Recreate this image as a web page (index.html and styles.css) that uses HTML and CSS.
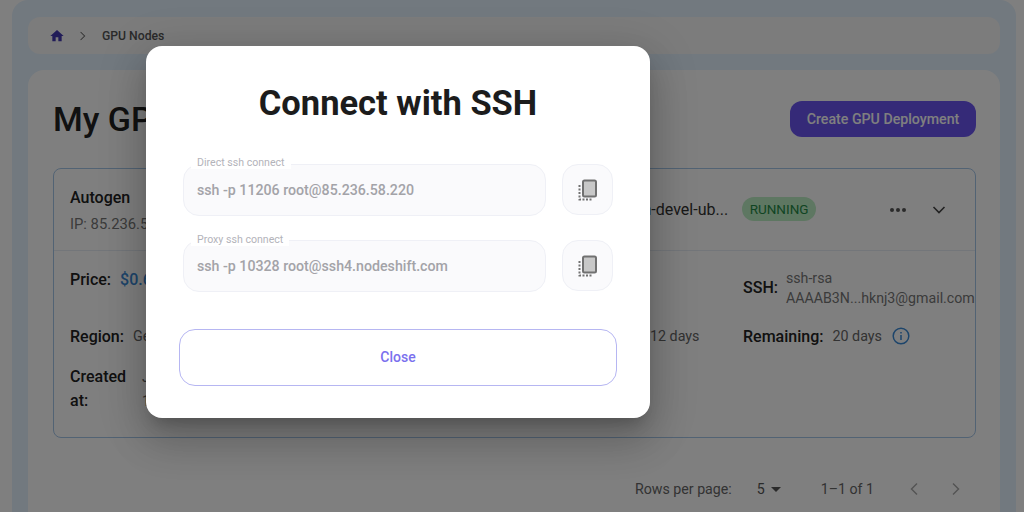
FILE: index.html
```html
<!DOCTYPE html>
<html lang="en">
<head>
<meta charset="utf-8">
<title>GPU Nodes</title>
<link rel="stylesheet" href="styles.css">
</head>
<body>
<div class="shell">
  <nav class="crumbs">
    <svg class="home" viewBox="0 0 24 24" width="16" height="16"><path d="M10 20v-6h4v6h5v-8h3L12 3 2 12h3v8z"/></svg>
    <svg class="sep" viewBox="0 0 10 12" width="8" height="10"><path d="M2 1l5 5-5 5"/></svg>
    <span class="crumb-text">GPU Nodes</span>
  </nav>
  <main class="panel">
    <header class="panel-head">
      <h1 class="page-title">My GPU Nodes</h1>
      <button class="create">Create GPU Deployment</button>
    </header>
    <section class="node">
      <div class="node-head">
        <div class="node-id">
          <div class="node-name">Autogen</div>
          <div class="node-ip">IP: 85.236.58.220</div>
        </div>
        <span class="node-image">pytorch-devel-ub...</span>
        <span class="status">RUNNING</span>
        <span class="dots"><i></i><i></i><i></i></span>
        <svg class="chev" viewBox="0 0 14 8" width="14" height="8"><path d="M1.500 1l5.500 5.500L12.500 1"/></svg>
      </div>
      <div class="node-body">
        <div class="row row-price">
          <div class="cell"><b class="key">Price:</b><span class="price">$0.60/hr</span></div>
          <div class="cell cell-ssh"><b class="key">SSH:</b><span class="ssh">ssh-rsa<br>AAAAB3N...hknj3@gmail.com</span></div>
        </div>
        <div class="row row-region">
          <div class="cell"><b class="key">Region:</b><span class="val">Germany</span></div>
          <div class="cell cell-used"><span class="val">12 days</span></div>
          <div class="cell cell-remain"><b class="key">Remaining:</b><span class="val">20 days</span>
            <svg class="info" viewBox="0 0 18 18" width="18" height="18"><circle cx="9" cy="9" r="7.800"/><path d="M9 8v5M9 5v1.600"/></svg>
          </div>
        </div>
        <div class="row-created">
          <b class="key created-key">Created at:</b><span class="val created-val">Jun 10, 2024<br>10:30</span>
        </div>
      </div>
    </section>
    <footer class="pager">
      <span>Rows per page:</span>
      <span class="per">5<svg viewBox="0 0 10 5" width="10" height="5"><path d="M0 0h10L5 5z"/></svg></span>
      <span class="range">1–1 of 1</span>
      <svg class="arrow off" viewBox="0 0 10 14" width="10" height="14"><path d="M8 1.500L2.500 7 8 12.500"/></svg>
      <svg class="arrow off" viewBox="0 0 10 14" width="10" height="14"><path d="M2 1.500L7.500 7 2 12.500"/></svg>
    </footer>
  </main>
</div>

<div class="backdrop">
  <div class="modal">
    <h2 class="modal-title">Connect with SSH</h2>
    <div class="field-row">
      <div class="field"><span class="legend">Direct ssh connect</span><span class="cmd">ssh -p 11206 root@85.236.58.220</span></div>
      <button class="copy" aria-label="Copy">
        <svg viewBox="0 0 20 22" width="20" height="22"><rect class="copy-back" x="5" y="1.500" width="13" height="16" rx="1.500"/><path class="copy-dots" d="M1.500 6v14.500H14"/></svg>
      </button>
    </div>
    <div class="field-row">
      <div class="field"><span class="legend legend-low">Proxy ssh connect</span><span class="cmd">ssh -p 10328 root@ssh4.nodeshift.com</span></div>
      <button class="copy" aria-label="Copy">
        <svg viewBox="0 0 20 22" width="20" height="22"><rect class="copy-back" x="5" y="1.500" width="13" height="16" rx="1.500"/><path class="copy-dots" d="M1.500 6v14.500H14"/></svg>
      </button>
    </div>
    <button class="close">Close</button>
  </div>
</div>
</body>
</html>
```

FILE: styles.css
```css
* { box-sizing: border-box; }
html, body { margin: 0; height: 100%; overflow: hidden; }
body { background: #fff; font-family: Roboto, "Liberation Sans", sans-serif; color: #222; width: 1024px; height: 512px; position: relative; }

.shell { margin: 0 8px 0 12px; height: 512px; padding: 17px 16px 0; background: #e4f2ff; border-radius: 16px 16px 0 0; display: flex; flex-direction: column; gap: 16px; overflow: hidden; }

.crumbs { height: 37px; flex: none; background: #f8f8f8; border-radius: 12px; display: flex; align-items: center; padding-left: 21px; }
.home { fill: #4338b0; }
.sep { fill: none; stroke: #666; stroke-width: 1.300; margin-left: 14px; }
.crumb-text { font-size: 12.200px; font-weight: 500; color: #555; margin-left: 15px; }

.panel { flex: 1; background: #fff; border-radius: 16px 16px 0 0; padding: 30px 24px 0 25px; }
.panel-head { display: flex; justify-content: space-between; align-items: center; height: 37px; }
.page-title { margin: 0; font-size: 34px; font-weight: 500; color: #222; white-space: nowrap; }
.create { width: 186px; height: 36px; border: 0; border-radius: 12px; background: #6a54f0; color: #fff; font: 500 14.200px Roboto, sans-serif; }

.node { margin-top: 31px; height: 270px; border: 1px solid #a5c6e8; border-radius: 8px; }
.node-head { height: 82px; border-bottom: 1px solid #e6edf5; display: flex; align-items: center; padding: 0 29px 0 16px; }
.node-id { width: 440px; }
.node-name { font-size: 16px; font-weight: 500; line-height: 20px; margin-top: 3px; }
.node-ip { font-size: 14.800px; color: #777; line-height: 20px; margin-top: 6px; }
.node-image { font-size: 16px; color: #333; width: 219px; text-align: right; white-space: nowrap; }
.status { margin-left: 14px; height: 24px; width: 74px; border-radius: 12px; background: #bdeec4; color: #1f8a46; font-size: 13.500px; font-weight: 400; display: flex; align-items: center; justify-content: center; margin-top: -1px; }
.dots { margin-left: 74px; display: flex; gap: 2px; }
.dots i { width: 4px; height: 4px; border-radius: 50%; background: #555; }
.chev { margin-left: 26px; fill: none; stroke: #444; stroke-width: 1.600; }

.node-body { padding: 0 0 0 16px; }
.key { font-size: 16px; font-weight: 500; color: #222; white-space: nowrap; }
.val { font-size: 14.300px; color: #666; white-space: nowrap; }
.row { display: flex; align-items: center; }
.cell { display: flex; align-items: center; gap: 9px; }
.row-price { height: 57px; justify-content: space-between; }
.price { font-size: 16px; font-weight: 500; color: #3a8ad6; }
.cell-ssh { width: 232px; gap: 8px; margin-top: 16px; }
.ssh { font-size: 14.200px; line-height: 20px; color: #777; white-space: nowrap; }
.row-region { height: 56px; }
.row-region .cell:first-child { width: 500px; }
.cell-used { width: 173px; padding-left: 80px; }
.info { fill: none; stroke: #3a8ad6; stroke-width: 1.500; margin-left: 1px; }
.row-created { display: flex; gap: 15px; align-items: flex-start; margin-top: 1px; }
.created-key { width: 57px; white-space: normal; line-height: 24px; }
.created-val { line-height: 24px; }

.pager { display: flex; align-items: center; height: 24px; margin-top: 39px; font-size: 14.200px; color: #666; padding-left: 582px; }
.per { margin-left: 25px; display: flex; align-items: center; gap: 6px; color: #555; }
.per svg { fill: #555; }
.range { margin-left: 40px; }
.arrow { fill: none; stroke: #aaa; stroke-width: 1.500; margin-left: 35px; }
.arrow:last-child { margin-left: 32px; }

.backdrop { position: absolute; inset: 0; background: rgba(0, 0, 0, .5); padding: 46px 0 0 146px; }
.modal { width: 504px; height: 372px; background: #fff; border-radius: 16px; padding: 0 33px; box-shadow: 0 11px 15px -7px rgba(0,0,0,.2), 0 24px 38px 3px rgba(0,0,0,.14), 0 9px 46px 8px rgba(0,0,0,.12); display: flex; flex-direction: column; }
.modal-title { margin: 35px 0 39px; font-size: 34.500px; line-height: 44px; font-weight: 700; color: #1c1c1c; text-align: center; }
.field-row { display: flex; gap: 16px; margin: 0 4px 24px; }
.field { position: relative; width: 363px; height: 52px; background: #fafafc; border: 1px solid #eff0f6; border-radius: 16px; display: flex; align-items: center; padding-left: 13px; }
.legend { position: absolute; left: 7px; top: -9px; padding: 0 6px; font-size: 10.600px; line-height: 13px; color: #b3b3ba; background: #fff; }
.legend-low { top: -8px; }
.cmd { font-size: 14.200px; font-weight: 500; color: #a3a3a8; }
.copy { width: 51px; height: 51px; background: #fafafc; border: 1px solid #eff0f6; border-radius: 16px; display: flex; align-items: center; justify-content: center; padding: 0; }
.copy-back { fill: #c8c8c8; stroke: #717171; stroke-width: 2; }
.copy-dots { fill: none; stroke: #717171; stroke-width: 2; stroke-dasharray: 2 1.500; }
.close { width: 438px; height: 57px; margin-top: 13px; padding-bottom: 3px; background: #fff; border: 1px solid #b6b6f2; border-radius: 16px; color: #7a70ee; font: 500 14px Roboto, sans-serif; }
```
